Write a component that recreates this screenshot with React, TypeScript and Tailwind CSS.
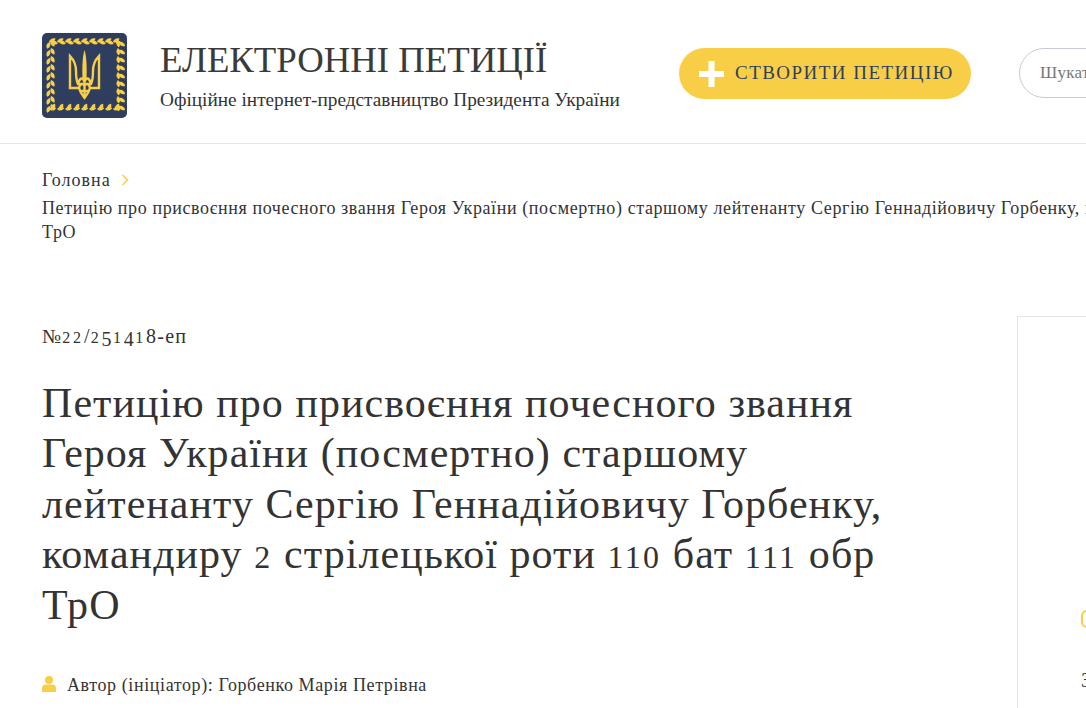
const serif = "font-['Liberation_Serif',serif]";

function Leaf({ x, y, r }: { x: number; y: number; r: number }) {
  return <path d="M0 0C1.500-2.800 4.500-3.600 7-2.200C6 .8 2.800 2 0 0Z" transform={`translate(${x} ${y}) rotate(${r})`} />;
}

function Logo() {
  const pts = [7, 15, 23, 31, 39, 47, 55, 63, 71];
  return (
    <svg width="85" height="85" viewBox="0 0 85 85" className="shrink-0">
      <rect width="85" height="85" rx="5" fill="#2f3e5f" />
      <g fill="#f8ce46">
        {pts.map((p) => (
          <g key={p}>
            <Leaf x={p} y={9} r={-10} />
            <Leaf x={p + 2} y={8} r={40} />
            <Leaf x={p} y={76} r={10} />
            <Leaf x={p + 2} y={77} r={-40} />
            <Leaf x={9} y={p} r={80} />
            <Leaf x={8} y={p + 2} r={130} />
            <Leaf x={76} y={p} r={100} />
            <Leaf x={77} y={p + 2} r={50} />
          </g>
        ))}
      </g>
      <path
        fill="none"
        stroke="#f8ce46"
        strokeWidth="2.400"
        d="M28 23V55H37C38 59 40 62 42.500 65C45 62 47 59 48 55H57V23C53 27 51 31 51 38C51 44 51 47 49 51H36C34 47 34 44 34 38C34 31 32 27 28 23ZM36 51C38 44 41 44 42.500 49C44 44 47 44 49 51M37 55C38 50 41 50 42.500 53C44 50 47 50 48 55M42.500 53V65M37.500 58H47.500"
      />
      <path fill="#f8ce46" d="M42.500 17C44.500 23 45 34 44.500 47H40.500C40 34 40.500 23 42.500 17Z" />
    </svg>
  );
}

function Num({ children }: { children: React.ReactNode }) {
  return <span className="text-[32px] leading-none tracking-[2.300px]">{children}</span>;
}

function Small({ children }: { children: React.ReactNode }) {
  return <span className="text-[16px] leading-none tracking-[2.800px]">{children}</span>;
}

function Drop({ children }: { children: React.ReactNode }) {
  return <span className="align-[-3px] leading-none tracking-[1.500px]">{children}</span>;
}

export default function App() {
  return (
    <div className={`w-[1086px] h-[708px] overflow-hidden bg-white text-[#333] ${serif}`}>
      <header className="h-[144px] border-b border-[#e5e5e5] flex items-start pl-[42px] pt-[33px] w-[1400px]">
        <Logo />
        <div className="ml-[33px] w-[519px] shrink-0 pt-[7px]">
          <div className="text-[36.750px] leading-[40px] text-[#3a3a3a]">ЕЛЕКТРОННІ ПЕТИЦІЇ</div>
          <div className="text-[19.300px] leading-[22px] mt-[9px] text-[#333]">Офіційне інтернет-представництво Президента України</div>
        </div>
        <button className="mt-[15px] w-[292px] h-[51px] rounded-full bg-[#f8ce46] flex items-center pl-[20px] shrink-0">
          <svg width="25" height="26" viewBox="0 0 25 26" className="shrink-0">
            <path fill="#fff" d="M9.500 0H15.500V10H25V16H15.500V26H9.500V16H0V10H9.500Z" />
          </svg>
          <span className="ml-[11px] text-[19px] tracking-[1.470px] text-[#2f3e5f] whitespace-nowrap">СТВОРИТИ ПЕТИЦІЮ</span>
        </button>
        <div className="mt-[15px] ml-[48px] w-[300px] h-[50px] rounded-full border border-[#c9c9dc] flex items-center pl-[20px] shrink-0 text-[17px] tracking-[0.300px] text-[#777]">
          Шукати петицію
        </div>
      </header>

      <div className="flex w-[1500px]">
        <div className="w-[975px] shrink-0 pl-[42px]">
          <div className="pt-[24px] text-[18px] tracking-[0.600px]">
            <div className="flex items-center h-[24px] text-[#333] tracking-[1px]">
              Головна
              <svg width="8" height="12" viewBox="0 0 8 12" className="ml-[10px]">
                <path d="M1.500 1L6.500 6L1.500 11" fill="none" stroke="#f8ce46" strokeWidth="1.500" />
              </svg>
            </div>
            <div className="w-[1400px] leading-[24px] mt-[4px] whitespace-nowrap">
              Петицію про присвоєння почесного звання Героя України (посмертно) старшому лейтенанту Сергію Геннадійовичу Горбенку, командиру 2 стрілецької роти 110 бат 111 обр
              <br />
              ТрО
            </div>
          </div>

          <div className="mt-[80px] text-[20px] leading-[24px] tracking-[1.200px] whitespace-nowrap">
            №<Small>22</Small>/<Small>2</Small><Drop>5</Drop><Small>1</Small><Drop>4</Drop><Small>1</Small>8-еп
          </div>

          <h1 className="mt-[29px] text-[42px] leading-[50.400px] tracking-[1.050px] text-[#333] whitespace-nowrap">
            Петицію про присвоєння почесного звання
            <br />
            Героя України (посмертно) старшому
            <br />
            лейтенанту Сергію Геннадійовичу Горбенку,
            <br />
            командиру <Num>2</Num> стрілецької роти <Num>110</Num> бат <Num>111</Num> обр
            <br />
            ТрО
          </h1>

          <div className="mt-[43px] flex items-center text-[18px] leading-[24px] tracking-[0.600px]">
            <svg width="14" height="16" viewBox="0 0 14 16" className="shrink-0 mb-[2px]">
              <circle cx="7" cy="4" r="4" fill="#f8ce46" />
              <path d="M0 16V12C0 9.500 2 8.500 3.500 8.500H10.500C12 8.500 14 9.500 14 12V16Z" fill="#f8ce46" />
            </svg>
            <span className="ml-[11px]">Автор (ініціатор): Горбенко Марія Петрівна</span>
          </div>
        </div>

        <aside className="ml-[42px] mt-[172px] w-[280px] h-[500px] border border-[#e5e5e5] shrink-0 pl-[63px]">
          <div className="mt-[293px] w-[12px] h-[18px] rounded-full border-2 border-[#f8ce46]" />
          <div className="mt-[40px] text-[20px] leading-[24px]">З</div>
        </aside>
      </div>
    </div>
  );
}
